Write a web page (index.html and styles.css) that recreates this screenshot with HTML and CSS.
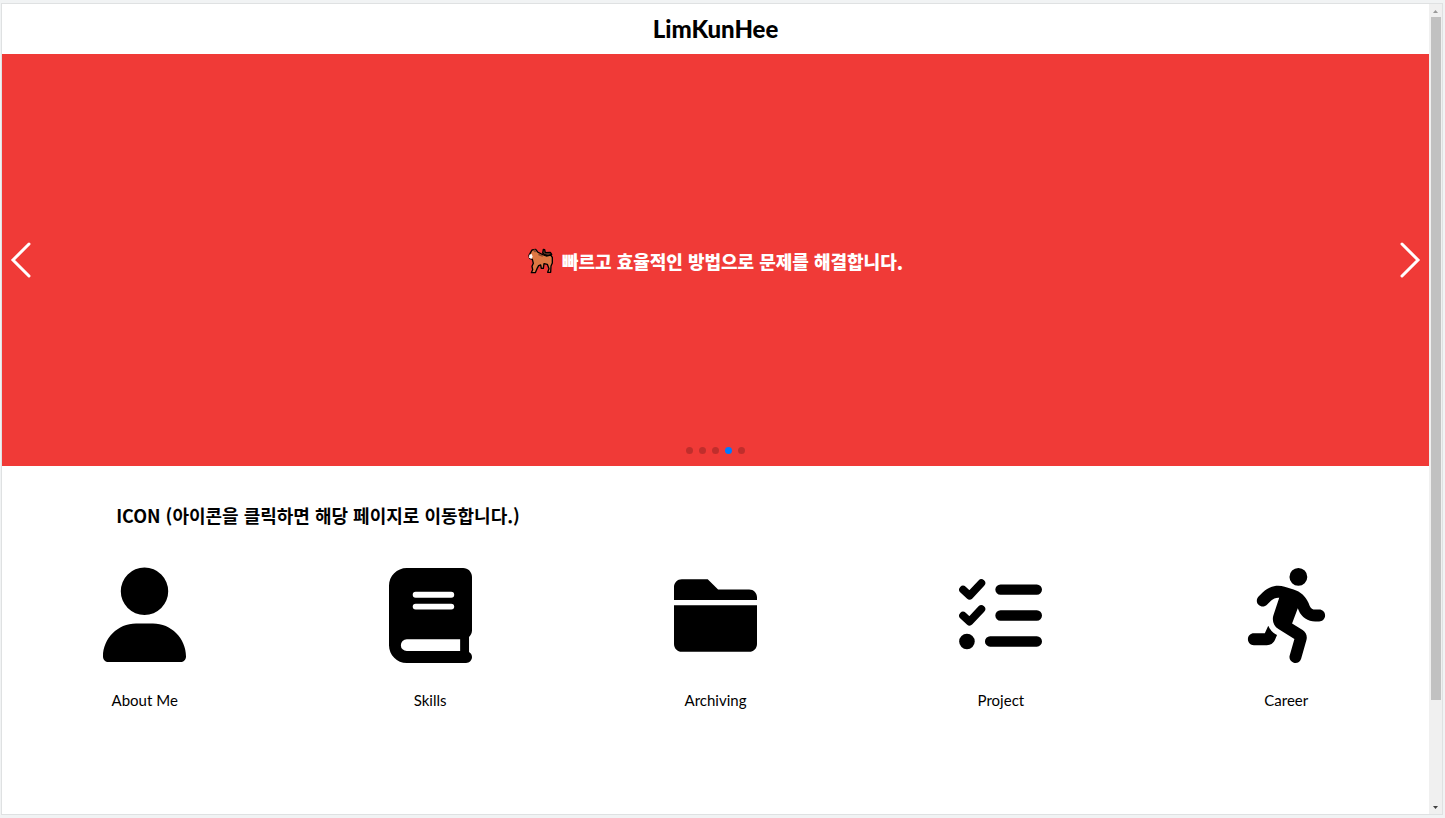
FILE: index.html
```html
<!DOCTYPE html>
<html lang="ko">
<head>
<meta charset="utf-8">
<title>LimKunHee</title>
<link rel="stylesheet" href="styles.css">
</head>
<body>
<div class="window">
  <div class="page">
    <header class="header"><h1 class="title">LimKunHee</h1></header>

    <section class="slider">
      <button class="arrow" type="button" aria-label="이전">
        <svg viewBox="0 0 22 38"><path d="M19 3 3 19 19 35"/></svg>
      </button>
      <p class="slide">
        <svg class="horse" viewBox="0 0 78 78" aria-hidden="true">
          <path class="tail" d="M48 19 44 15 46 4 50 5 52 14 67 13 71 19 62 24Z"/>
          <path class="coat" d="M8 13 12 6 23 4 29 12 42 19 55 24 68 21 73 28 73 45 69 54 68 73H59L63 62 58 49 48 47 46 61 40 61 38 51 32 53 27 62 22 74H10L14 65 12 55 16 46 13 34 5 31 3 22Z"/>
          <path class="mane" d="M14 7 21 4 26 12 20 13ZM31 16 47 23 43 26 31 22Z"/>
          <path class="muzzle" d="M4 20 11 18 14 26 10 33 3 29Z"/>
        </svg>
        <span>빠르고 효율적인 방법으로 문제를 해결합니다.</span>
      </p>
      <button class="arrow" type="button" aria-label="다음">
        <svg viewBox="0 0 22 38"><path d="M3 3 19 19 3 35"/></svg>
      </button>
      <div class="dots">
        <button class="dot" type="button" aria-label="1"></button>
        <button class="dot" type="button" aria-label="2"></button>
        <button class="dot" type="button" aria-label="3"></button>
        <button class="dot active" type="button" aria-label="4"></button>
        <button class="dot" type="button" aria-label="5"></button>
      </div>
    </section>

    <main class="content">
      <h2 class="heading">ICON (아이콘을 클릭하면 해당 페이지로 이동합니다.)</h2>
      <nav class="menu">
        <a class="item" href="#about">
          <svg class="icon" viewBox="0 0 448 512"><path d="M224 253A127 127 0 1 0 224 -3a127 127 0 1 0 0 256zm-45.700 46C79.800 299 0 379 0 477C0 494 13.300 507 29.700 507H418.300c16.400 0 29.700-13 29.700-30C448 379 368.200 299 269.700 299H178.300z"/></svg>
          <span>About Me</span>
        </a>
        <a class="item" href="#skills">
          <svg class="icon" viewBox="0 0 448 512"><path fill-rule="evenodd" d="M448 336V48C448 21.500 426.500 0 400 0H96C43 0 0 43 0 96v320c0 53 43 96 96 96h320c17.700 0 32-14.300 32-32c0-11.700-6.600-21.500-16-27v-81C441.800 362.800 448 350.200 448 336zM144 128H336a16 16 0 0 1 0 32H144a16 16 0 0 1 0-32zM144 192H336a16 16 0 0 1 0 32H144a16 16 0 0 1 0-32zM384 448H96a32 32 0 0 1 0-64H384z"/></svg>
          <span>Skills</span>
        </a>
        <a class="item" href="#archiving">
          <svg class="icon" viewBox="0 0 512 512"><path d="M0 160V80C0 53 21 32 48 32H208L272 96H464C491 96 512 117 512 144V160ZM0 192H512V432C512 459 491 480 464 480H48C21 480 0 459 0 432Z"/></svg>
          <span>Archiving</span>
        </a>
        <a class="item" href="#project">
          <svg class="icon" viewBox="0 0 512 512"><path class="bars" d="M256 96H480M256 256H480M192 416H480"/><path class="checks" d="M25 97 65 134 138 56M25 257 65 294 138 216"/><circle cx="49" cy="416" r="48"/></svg>
          <span>Project</span>
        </a>
        <a class="item" href="#career">
          <svg class="icon" viewBox="0 0 416 512"><path d="M320 48a48 48 0 1 0 -96 0 48 48 0 1 0 96 0zM125.700 175.500c9.900-9.900 23.400-15.500 37.500-15.500c1.900 0 3.800 .1 5.600 .3L137.600 254c-9.300 28 1.700 58.800 26.800 74.500l86.200 53.900-25.400 88.800c-4.900 17 5 34.700 22 39.600s34.700-5 39.600-22l28.700-100.400c5.900-20.600-2.600-42.600-20.700-53.900L238 299l30.900-82.400 5.100 12.300C289 264.700 323.900 288 362.700 288H384c17.700 0 32-14.300 32-32s-14.300-32-32-32H362.700c-12.900 0-24.600-7.800-29.500-19.700l-6.300-15c-14.600-35.100-44.100-61.900-80.500-73.100l-48.700-15c-11.100-3.400-22.700-5.200-34.400-5.200c-31 0-60.800 12.300-82.700 34.300L57.400 153.400c-12.500 12.500-12.500 32.800 0 45.300s32.800 12.500 45.300 0l23.100-23.100zM91.200 352H32c-17.700 0-32 14.300-32 32s14.300 32 32 32h69.600c19 0 36.200-11.200 43.900-28.500L157 361.600l-9.500-6c-17.500-10.900-30.500-26.800-37.900-44.900L91.200 352z"/></svg>
          <span>Career</span>
        </a>
      </nav>
    </main>
  </div>
  <div class="scrollbar" aria-hidden="true">
    <svg class="caret muted" viewBox="0 0 5 3"><path d="M0 3 2.500 0 5 3Z"/></svg>
    <div class="track"><div class="thumb"></div></div>
    <svg class="caret" viewBox="0 0 5 3"><path d="M0 0 2.500 3 5 0Z"/></svg>
  </div>
</div>
</body>
</html>
```

FILE: styles.css
```css
* { box-sizing: border-box; }

body {
  margin: 0;
  padding: 3px 2px 3px 1px;
  min-height: 100vh;
  display: flex;
  background: #f1f3f4;
  color: #000;
  font-family: Lato, "Noto Sans CJK KR", sans-serif;
}

.window {
  flex: 1;
  display: flex;
  border: 1px solid #dfe1e2;
  background: #fff;
}

.page { flex: 1; min-width: 0; }

.header {
  display: flex;
  align-items: center;
  justify-content: center;
  height: 50px;
}

.title {
  margin: 0;
  font-size: 24px;
  font-weight: 900;
  line-height: 32px;
}

.slider {
  position: relative;
  display: flex;
  align-items: center;
  justify-content: space-between;
  height: 412px;
  padding: 0 8px;
  background: #f03a37;
}

.arrow {
  display: block;
  padding: 0;
  border: 0;
  background: none;
  cursor: pointer;
}

.arrow svg {
  display: block;
  width: 22px;
  height: 38px;
  fill: none;
  stroke: #fff;
  stroke-width: 3;
  stroke-linecap: round;
}

.slide {
  display: flex;
  align-items: center;
  gap: 8px;
  margin: 0;
  padding-top: 2px;
  color: #fff;
  font-family: "Noto Sans CJK KR", sans-serif;
  font-size: 18px;
  font-weight: 900;
  line-height: 28px;
}

.horse { width: 26px; height: 26px; stroke: #000; stroke-width: 4; stroke-linejoin: round; }
.coat { fill: #df7843; }
.tail { fill: #6b3a2a; }
.mane { fill: #8a4a30; stroke: none; }
.muzzle { fill: #fff; stroke: none; }

.dots {
  position: absolute;
  left: 0;
  right: 0;
  bottom: 12px;
  display: flex;
  justify-content: center;
  gap: 6px;
}

.dot {
  width: 7px;
  height: 7px;
  padding: 0;
  border: 0;
  border-radius: 50%;
  background: rgba(0, 0, 0, 0.2);
}

.dot.active { background: #007aff; }

.heading {
  margin: 0;
  padding: 35px 8% 0;
  font-family: "Noto Sans CJK KR", sans-serif;
  font-size: 18px;
  line-height: 28px;
}

.menu {
  display: grid;
  grid-template-columns: repeat(5, 1fr);
  padding-top: 39px;
}

.item {
  display: flex;
  flex-direction: column;
  align-items: center;
  gap: 25px;
  color: inherit;
  font-size: 15px;
  line-height: 24px;
  text-decoration: none;
}

.icon { width: 83px; height: 95px; overflow: visible; }

.bars, .checks { fill: none; stroke: #000; stroke-linecap: round; stroke-linejoin: round; }
.bars { stroke-width: 64; }
.checks { stroke-width: 48; }

.scrollbar {
  display: flex;
  flex-direction: column;
  align-items: center;
  gap: 4px;
  width: 13px;
  padding: 6px 0 5px;
  background: #f0f0f0;
}

.caret { width: 5px; height: 3px; fill: #404040; }
.caret.muted { fill: #999; }
.track { flex: 1; width: 10px; }
.thumb { height: 87%; background: #c1c1c1; }
```
